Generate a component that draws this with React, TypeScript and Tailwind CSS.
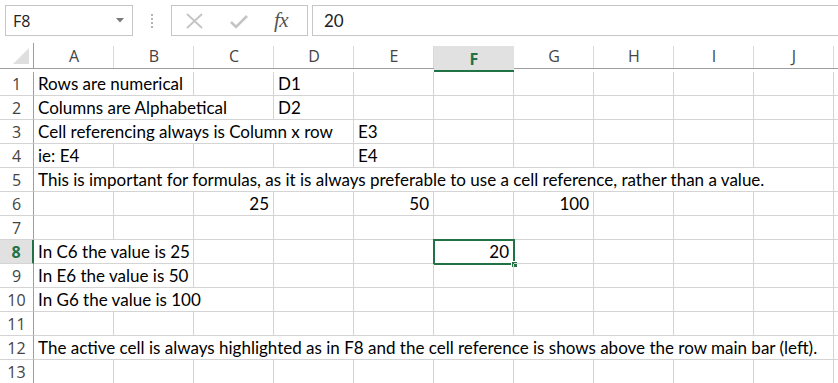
type Cell = { span?: number; text?: string; right?: boolean; active?: boolean };

const COLS = ["A", "B", "C", "D", "E", "F", "G", "H", "I", "J"];

const rows: Cell[][] = [
    [{ span: 2, text: "Rows are numerical" }, {}, { text: "D1" }],
    [{ span: 3, text: "Columns are Alphabetical" }, { text: "D2" }],
    [{ span: 4, text: "Cell referencing always is Column x row" }, { text: "E3" }],
    [{ text: "ie: E4" }, {}, {}, {}, { text: "E4" }],
    [
        {
            span: 10,
            text: "This is important for formulas, as it is always preferable to use a cell reference, rather than a value.",
        },
    ],
    [{}, {}, { text: "25", right: true }, {}, { text: "50", right: true }, {}, { text: "100", right: true }],
    [],
    [{ span: 2, text: "In C6 the value is 25" }, {}, {}, {}, { text: "20", right: true, active: true }],
    [{ span: 2, text: "In E6 the value is 50" }],
    [{ span: 3, text: "In G6 the value is 100" }],
    [],
    [
        {
            span: 10,
            text: "The active cell is always highlighted as in F8 and the cell reference is shows above the row main bar (left).",
        },
    ],
    [],
];

const spanClass: Record<number, string> = {
    1: "col-span-1",
    2: "col-span-2",
    3: "col-span-3",
    4: "col-span-4",
    10: "col-span-10",
};

// pad each row out to the ten visible columns
function fillRow(cells: Cell[]): Cell[] {
    const out = [...cells];
    let used = out.reduce((n, c) => n + (c.span ?? 1), 0);
    while (used < 10) {
        out.push({});
        used++;
    }
    return out;
}

function FormulaBar() {
    return (
        <div className="h-[43px] flex items-start pt-[5px] font-['Open_Sans',sans-serif]">
            {/* Name box */}
            <div className="ml-[5px] w-[128px] h-[31px] border border-[#c6c6c6] flex items-center justify-between pl-[7px] pr-[8px]">
                <span className="text-[16px] text-[#222]">F8</span>
                <svg width="8" height="5" viewBox="0 0 8 5">
                    <path d="M0 0h8L4 4.5z" fill="#7a7a7a" />
                </svg>
            </div>
            {/* grip dots */}
            <div className="w-[38px] h-[31px] flex flex-col items-center justify-center gap-[2px]">
                <div className="w-[2px] h-[2px] bg-[#b4b4b4]" />
                <div className="w-[2px] h-[2px] bg-[#b4b4b4]" />
                <div className="w-[2px] h-[2px] bg-[#b4b4b4]" />
                <div className="w-[2px] h-[2px] bg-[#b4b4b4]" />
            </div>
            {/* cancel / enter / fx */}
            <div className="w-[137px] h-[31px] border border-[#c6c6c6] flex items-center">
                <svg className="ml-[14px]" width="17" height="16" viewBox="0 0 17 16">
                    <path d="M1 1l15 14M16 1L1 15" stroke="#c4c4c4" strokeWidth="1.8" fill="none" />
                </svg>
                <svg className="ml-[27px] mt-[2px]" width="18" height="14" viewBox="0 0 18 14">
                    <path d="M1 7l5 5L17 1" stroke="#c4c4c4" strokeWidth="2.6" fill="none" />
                </svg>
                <span className="ml-[26px] font-['Liberation_Serif',serif] italic text-[21px] leading-none text-[#555] tracking-[-0.5px]">
                    fx
                </span>
            </div>
            {/* formula input */}
            <div className="ml-[4px] flex-1 h-[31px] border border-r-0 border-[#c6c6c6] flex items-center pl-[11px]">
                <span className="text-[17px] text-[#222] font-['Lato',sans-serif]">20</span>
            </div>
        </div>
    );
}

export default function App() {
    return (
        <div className="w-[838px] h-[383px] bg-white overflow-hidden select-none">
            <FormulaBar />

            <div className="grid grid-cols-[34px_repeat(10,80px)_1fr] font-['Lato',sans-serif]">
                {/* Column headers */}
                <div className="h-[26px] border-b border-r border-[#9e9e9e] flex items-end justify-end pr-[4px] pb-[4px]">
                    <svg width="16" height="16" viewBox="0 0 16 16">
                        <path d="M16 0v16H0z" fill="#dfdfdf" />
                    </svg>
                </div>
                {COLS.map((c) => {
                    const sel = c === "F";
                    return (
                        <div
                            key={c}
                            className={`h-[26px] pt-[3px] relative flex items-end justify-center font-['Open_Sans',sans-serif] text-[16px] leading-[22px] ${
                                sel
                                    ? "bg-[#e1e1e1] border-b-2 border-[#217346] text-[#217346] font-bold mt-[3px] h-[23px]"
                                    : "border-b border-[#9e9e9e] text-[#444]"
                            }`}
                        >
                            {!sel && <div className="absolute right-0 top-[3px] bottom-0 w-px bg-[#dadada]" />}
                            <span className={sel ? "" : "pb-[1px]"}>{c}</span>
                        </div>
                    );
                })}
                <div className="h-[26px] border-b border-[#9e9e9e]" />

                {/* Rows */}
                {rows.map((r, i) => {
                    const n = i + 1;
                    const selRow = n === 8;
                    return [
                        <div
                            key={`h${n}`}
                            className={`h-[24px] border-b border-[#d4d4d4] flex items-center justify-center font-['Open_Sans',sans-serif] text-[16px] ${
                                selRow
                                    ? "bg-[#e1e1e1] border-r-2 border-r-[#217346] text-[#217346] font-bold"
                                    : "border-r border-r-[#9e9e9e] text-[#444]"
                            }`}
                        >
                            {n}
                        </div>,
                        ...fillRow(r).map((c, j) => (
                            <div
                                key={`c${n}-${j}`}
                                className={`${spanClass[c.span ?? 1]} h-[24px] relative border-b border-r border-[#d4d4d4] px-[4px] pt-[2px] text-[17px] leading-[20px] text-black whitespace-nowrap ${
                                    c.right ? "text-right" : "text-left"
                                }`}
                            >
                                {c.text}
                                {c.active && (
                                    <>
                                        <div className="absolute -left-px -top-px w-[82px] h-[26px] border-2 border-[#217346]" />
                                        <div className="absolute left-[77px] top-[21px] w-[7px] h-[7px] bg-[#217346] border border-white" />
                                    </>
                                )}
                            </div>
                        )),
                        <div key={`t${n}`} className="h-[24px] border-b border-[#d4d4d4]" />,
                    ];
                })}
            </div>
        </div>
    );
}
